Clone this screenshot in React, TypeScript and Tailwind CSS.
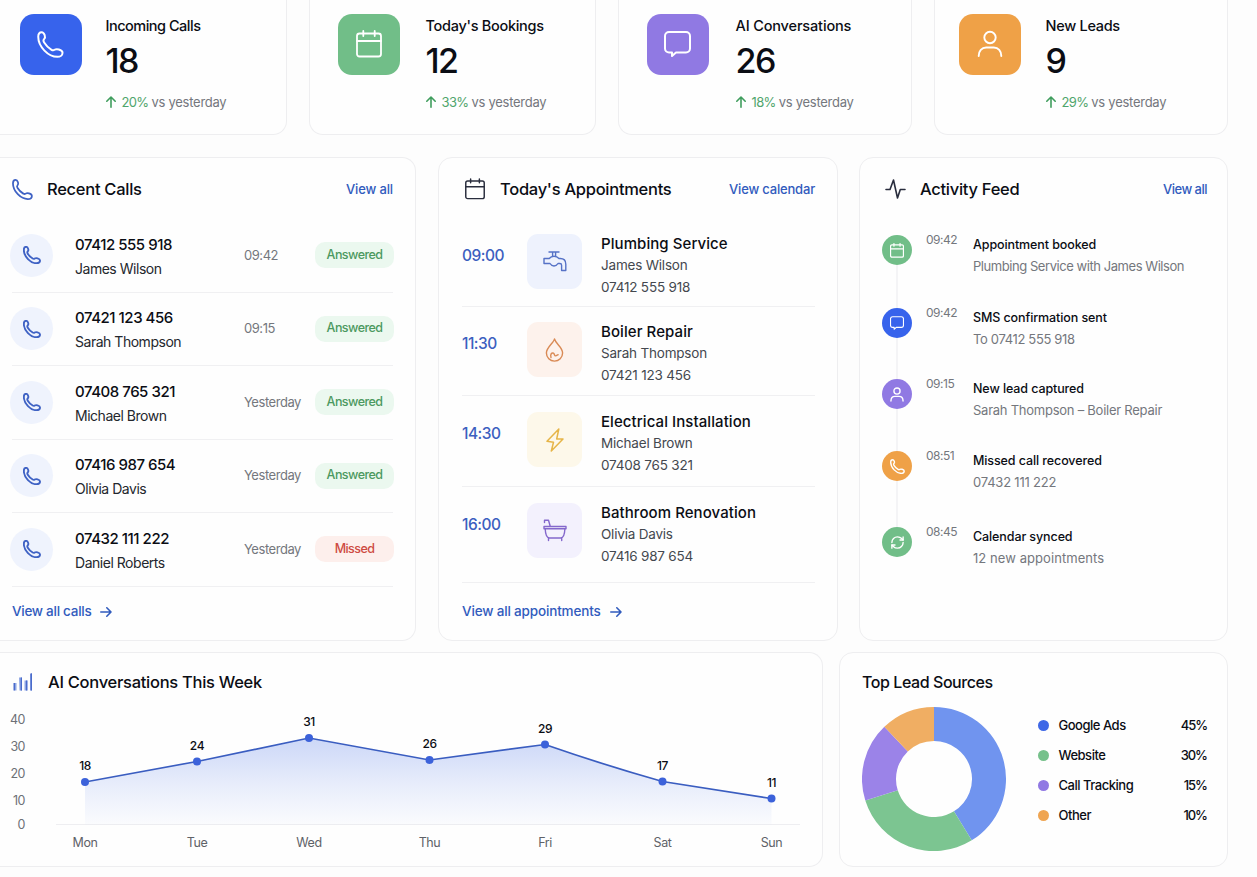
import React from "react";
import { RefreshCw } from "lucide-react";

type IconProps = { className?: string; stroke?: number };

function PhoneIcon({ className, stroke = 1.9 }: IconProps) {
  return (
    <svg viewBox="0 0 26 26" className={className} fill="none" stroke="currentColor" strokeWidth={stroke} strokeLinejoin="round">
      <path d="M1.200 5.600C1.200 2.900 2.600 1.200 4.500 1.200c1.500 0 2.300 1.200 2.900 2.800.6 1.600.4 2.800-.6 3.800-.9.9-.9 1.700.1 3.300 1.700 2.800 4.100 5.200 7.100 7 1.100.7 1.900.7 2.900 0 1.200-.8 2.500-.8 4.100-.3 2.400.7 3.600 1.700 3.600 3.100 0 2.400-2.200 4-5 4C11 24.900 1.200 15.200 1.200 5.600z" />
    </svg>
  );
}

function CalendarIcon({ className, stroke = 1.8 }: IconProps) {
  return (
    <svg viewBox="0 0 26 28" className={className} fill="none" stroke="currentColor" strokeWidth={stroke} strokeLinecap="round">
      <rect x="1" y="3.500" width="24" height="23" rx="2.500" />
      <path d="M1 11h24M7.300 1v5M18.700 1v5" />
    </svg>
  );
}

function ChatIcon({ className, stroke = 2 }: IconProps) {
  return (
    <svg viewBox="0 0 27 26" className={className} fill="none" stroke="currentColor" strokeWidth={stroke} strokeLinejoin="round">
      <path d="M5 1h17a4 4 0 0 1 4 4v12.500a4 4 0 0 1-4 4H12L8 25v-3.500H5a4 4 0 0 1-4-4V5a4 4 0 0 1 4-4z" />
    </svg>
  );
}

function UserIcon({ className, stroke = 1.9 }: IconProps) {
  return (
    <svg viewBox="0 0 26 28" className={className} fill="none" stroke="currentColor" strokeWidth={stroke} strokeLinecap="round">
      <circle cx="13" cy="7.500" r="5.700" />
      <path d="M1.700 26c0-5 3-8.500 7.500-8.500h7.600c4.500 0 7.500 3.500 7.500 8.500" />
    </svg>
  );
}

function PulseIcon({ className }: IconProps) {
  return (
    <svg viewBox="0 0 21 20" className={className} fill="none" stroke="currentColor" strokeWidth="1.600" strokeLinecap="round" strokeLinejoin="round">
      <path d="M1 10.500h4L8.500 1l4 18 2.800-8.500H20" />
    </svg>
  );
}

function BarsIcon({ className }: IconProps) {
  return (
    <svg viewBox="0 0 20 18" className={className}>
      <path fill="#8ea6e4" d="M1.500 10h2v7.500h-2zM6 4.500h3v13H6.500zM11.500 7.500h3v10h-3zM17 1h2v16.500h-2z" />
      <path fill="#4a6bcb" d="M.5 10H2v7.500H.5zM7.700 4.500H9v13H7.700zM13 7.500h1.300v10H13zM17.500.3H19v17.200h-1.300z" />
    </svg>
  );
}

function FaucetIcon() {
  return (
    <svg viewBox="0 0 24 21" className="h-[21px] w-6" fill="none" stroke="currentColor" strokeWidth="1.400" strokeLinejoin="round" strokeLinecap="round">
      <path d="M6 1h10M9.600 1v4.200M12.600 1v4.200" />
      <path d="M1 7.500h5.200C7.400 6 9 5.200 11 5.200S14.700 6 16 7.500h1.200c3.500 0 5.600 2.200 5.600 5.700v6.300h-4.200v-5.300c0-1.100-.6-1.700-1.700-1.700H15c-1 1.700-2.300 2.500-4 2.500s-3-.8-4-2.500H1z" />
    </svg>
  );
}

function FlameIcon() {
  return (
    <svg viewBox="0 0 19 24" className="h-6 w-[19px]" fill="none" stroke="currentColor" strokeWidth="1.400" strokeLinejoin="round" strokeLinecap="round">
      <path d="M9.500 1C8.800 5 1.400 9.200 1.400 15a8.100 8.100 0 0 0 16.200 0C17.600 9.200 11 6.200 9.500 1z" />
      <path d="M6 19.500c-1-3.300.8-5.300 2.500-4.300 1.300.8.600 2.700 2.200 2.700 1.200 0 1.300-1.200 2.400-1.200" />
    </svg>
  );
}

function BoltIcon() {
  return (
    <svg viewBox="0 0 18 24" className="h-6 w-[18px]" fill="none" stroke="currentColor" strokeWidth="1.500" strokeLinejoin="round">
      <path d="M12.800 1L1 13.200l6.500 1L5.300 23 17 11h-6.300z" />
    </svg>
  );
}

function BathIcon() {
  return (
    <svg viewBox="0 0 24 23" className="h-[23px] w-6" fill="none" stroke="currentColor" strokeWidth="1.400" strokeLinejoin="round" strokeLinecap="round">
      <path d="M1.500 3.500V1.300h4L7.300 7.500H23v2.300H1V7.500h6" />
      <path d="M2.200 9.800c.2 5 1.400 9.200 4.300 9.200h11.200c2.900 0 4-4.200 4.200-9.200M5.500 19v2.500M18.700 19v2.500" />
    </svg>
  );
}

function Arrow({ className }: IconProps) {
  return (
    <svg viewBox="0 0 12 12" className={className} fill="none" stroke="currentColor" strokeWidth="1.600" strokeLinecap="round" strokeLinejoin="round">
      <path d="M.8 6h10.200M6.800 1.800L11 6l-4.200 4.200" />
    </svg>
  );
}

const stats = [
  { label: "Incoming Calls", value: "18", change: "20%", card: "border-l-0 rounded-br-[14px] pl-5 gap-[24px]", track: "tracking-[-0.034em]", box: "bg-[#3763ec]", icon: <PhoneIcon className="size-[27px]" /> },
  { label: "Today's Bookings", value: "12", change: "33%", card: "rounded-b-[14px] pl-7 gap-[26px]", track: "tracking-[-0.02em]", box: "bg-[#71be88]", icon: <CalendarIcon className="h-7 w-[26px]" /> },
  { label: "AI Conversations", value: "26", change: "18%", card: "rounded-b-[14px] pl-7 gap-[27px]", track: "tracking-[-0.01em]", box: "bg-[#9079e3]", icon: <ChatIcon className="h-[26px] w-[27px]" /> },
  { label: "New Leads", value: "9", change: "29%", card: "rounded-b-[14px] pl-6 gap-[25px]", track: "tracking-[-0.02em]", box: "bg-[#efa147]", icon: <UserIcon className="h-7 w-[26px]" /> },
];

const calls = [
  { number: "07412 555 918", name: "James Wilson", time: "09:42", missed: false },
  { number: "07421 123 456", name: "Sarah Thompson", time: "09:15", missed: false },
  { number: "07408 765 321", name: "Michael Brown", time: "Yesterday", missed: false },
  { number: "07416 987 654", name: "Olivia Davis", time: "Yesterday", missed: false },
  { number: "07432 111 222", name: "Daniel Roberts", time: "Yesterday", missed: true },
];

const appointments = [
  { time: "09:00", title: "Plumbing Service", name: "James Wilson", phone: "07412 555 918", row: "h-[88px] pt-[15px]", box: "bg-[#eef2fd] text-[#5672c6]", icon: <FaucetIcon /> },
  { time: "11:30", title: "Boiler Repair", name: "Sarah Thompson", phone: "07421 123 456", row: "h-[89px] pt-[15px]", box: "bg-[#fdf2ec] text-[#d98a55]", icon: <FlameIcon /> },
  { time: "14:30", title: "Electrical Installation", name: "Michael Brown", phone: "07408 765 321", row: "h-[91px] pt-4", box: "bg-[#fdf8ea] text-[#e6b548]", icon: <BoltIcon /> },
  { time: "16:00", title: "Bathroom Renovation", name: "Olivia Davis", phone: "07416 987 654", row: "h-[96px] pt-4", box: "bg-[#f3f1fd] text-[#8468cc]", icon: <BathIcon /> },
];

const feed = [
  { time: "09:42", title: "Appointment booked", text: "Plumbing Service with James Wilson", row: "h-[73px]", track: "tracking-[-0.034em]", dot: "bg-[#71be88]", icon: <CalendarIcon className="h-[15px] w-[14px]" stroke={2.2} /> },
  { time: "09:42", title: "SMS confirmation sent", text: "To 07412 555 918", row: "h-[71px]", track: "tracking-[-0.026em]", dot: "bg-[#3763ec]", icon: <ChatIcon className="size-[14px]" stroke={2.2} /> },
  { time: "09:15", title: "New lead captured", text: "Sarah Thompson – Boiler Repair", row: "h-[72px]", track: "tracking-[-0.019em]", dot: "bg-[#9079e3]", icon: <UserIcon className="h-[15px] w-[14px]" stroke={2.6} /> },
  { time: "08:51", title: "Missed call recovered", text: "07432 111 222", row: "h-[76px]", track: "tracking-[-0.016em]", dot: "bg-[#efa147]", icon: <PhoneIcon className="size-[15px]" stroke={2.4} /> },
  { time: "08:45", title: "Calendar synced", text: "12 new appointments", row: "h-[60px]", track: "tracking-[0.005em]", dot: "bg-[#71be88]", icon: <RefreshCw className="size-[15px]" strokeWidth={2.2} /> },
];

const points = [
  { day: "Mon", value: 18, x: 85, y: 71 },
  { day: "Tue", value: 24, x: 197, y: 50.5 },
  { day: "Wed", value: 31, x: 309, y: 27 },
  { day: "Thu", value: 26, x: 429.5, y: 49 },
  { day: "Fri", value: 29, x: 545, y: 33.5 },
  { day: "Sat", value: 17, x: 662.5, y: 70.5 },
  { day: "Sun", value: 11, x: 771.5, y: 87.5 },
];

const yAxis = [
  { value: 40, y: 8 },
  { value: 30, y: 35 },
  { value: 20, y: 62.5 },
  { value: 10, y: 89.5 },
  { value: 0, y: 113 },
];

const sources = [
  { name: "Google Ads", percent: "45%", dot: "bg-[#3f68e6]", fill: "#7094ef", from: 0, to: 148.4 },
  { name: "Website", percent: "30%", dot: "bg-[#76c18b]", fill: "#7cc591", from: 148.4, to: 252.6 },
  { name: "Call Tracking", percent: "15%", dot: "bg-[#9079e3]", fill: "#9b83e8", from: 252.6, to: 316.4 },
  { name: "Other", percent: "10%", dot: "bg-[#efa552]", fill: "#f0ae63", from: 316.4, to: 360 },
];

function slice(from: number, to: number) {
  const at = (deg: number, r: number) => {
    const a = (deg * Math.PI) / 180;
    return `${72 + r * Math.sin(a)} ${72 - r * Math.cos(a)}`;
  };
  return `M${at(from, 72)}A72 72 0 0 1 ${at(to, 72)}L${at(to, 38)}A38 38 0 0 0 ${at(from, 38)}Z`;
}

function Title({ children }: { children: React.ReactNode }) {
  return <h2 className="text-[16.5px] leading-6 font-medium tracking-[-0.017em]">{children}</h2>;
}

function Stats() {
  return (
    <div className="grid grid-cols-[287px_287px_294px_294px] gap-[22px]">
      {stats.map((s) => (
        <div key={s.label} className={`flex h-[135px] border border-t-0 border-[#eeeef0] bg-[#fefefe] ${s.card}`}>
          <div className={`mt-[13.5px] flex size-[61.5px] shrink-0 items-center justify-center rounded-[14px] text-white ${s.box}`}>{s.icon}</div>
          <div className="pt-[15.5px]">
            <p className={`text-[14.5px] leading-5 font-medium ${s.track}`}>{s.label}</p>
            <p className="mt-[3px] text-[34px] leading-[44px] font-medium tracking-[-0.045em]">{s.value}</p>
            <p className="mt-[9px] flex items-center text-[13px] leading-5 tracking-[-0.02em] text-[#74777d]">
              <Arrow className="-ml-px mr-[5px] size-3 -rotate-90 text-[#3f9d5d]" />
              <span className="mr-[3px] tracking-[-0.05em] text-[#4fa56c]">{s.change}</span> vs yesterday
            </p>
          </div>
        </div>
      ))}
    </div>
  );
}

function RecentCalls() {
  return (
    <section className="mr-px rounded-r-[14px] border border-l-0 border-[#eeeef0] bg-[#fefefe] pr-[22px] pl-3">
      <div className="flex h-[61px] items-center pt-px">
        <PhoneIcon className="size-[21px] text-[#3f62c4]" stroke={2.2} />
        <div className="ml-[14px] flex-1">
          <Title>Recent Calls</Title>
        </div>
        <a className="pt-px text-[13px] font-medium tracking-[-0.01em] text-[#315bbd]">View all</a>
      </div>
      {calls.map((c) => (
        <div key={c.number} className="flex h-[73.5px] items-center border-b border-[#f0f0f2]">
          <div className="-ml-[2px] flex size-[43px] items-center justify-center rounded-full bg-[#eff3fd]">
            <PhoneIcon className="size-[18px] text-[#3f62c4]" stroke={2.7} />
          </div>
          <div className="ml-[22px] w-[169px] pt-[3px] leading-6">
            <p className="text-[15px] font-medium tracking-[-0.031em]">{c.number}</p>
            <p className="text-[14px] tracking-[-0.034em] text-[#24272d]">{c.name}</p>
          </div>
          <p className="flex-1 text-[13px] tracking-[-0.035em] text-[#74777d]">{c.time}</p>
          <span
            className={`-mr-px flex h-[26px] w-[79px] items-center justify-center rounded-[10px] text-[12.5px] font-medium tracking-[-0.045em] ${
              c.missed ? "bg-[#fdefec] text-[#ce4a42]" : "bg-[#ebf8ef] text-[#4b9960]"
            }`}
          >
            {c.missed ? "Missed" : "Answered"}
          </span>
        </div>
      ))}
      <a className="flex h-[50px] items-center gap-[9px] text-[13.5px] font-medium tracking-[-0.02em] text-[#315bbd]">
        View all calls <Arrow className="size-3" />
      </a>
    </section>
  );
}

function Appointments() {
  return (
    <section className="rounded-[14px] border border-[#eeeef0] bg-[#fefefe] pr-[22px] pl-[23px]">
      <div className="flex h-[61px] items-center pt-px">
        <CalendarIcon className="ml-[3px] h-[22px] w-5 text-[#292d3d]" stroke={1.9} />
        <div className="ml-[15px] flex-1">
          <Title>Today's Appointments</Title>
        </div>
        <a className="pt-px text-[13px] font-medium tracking-[-0.014em] text-[#315bbd]">View calendar</a>
      </div>
      {appointments.map((a) => (
        <div key={a.time} className={`flex items-start border-b border-[#f0f0f2] ${a.row}`}>
          <p className="mt-[11px] w-[65px] text-[15.5px] leading-[21px] font-medium tracking-[-0.032em] text-[#3c5fc0]">{a.time}</p>
          <div className={`flex size-[55px] items-center justify-center rounded-[11px] ${a.box}`}>{a.icon}</div>
          <div className="-mt-px ml-[19px] text-[13.5px] leading-[21.5px] tracking-[-0.015em] text-[#44484f]">
            <h3 className="text-[15px] leading-[22px] font-medium tracking-[0.005em] text-[#0b0d14]">{a.title}</h3>
            <p>{a.name}</p>
            <p>{a.phone}</p>
          </div>
        </div>
      ))}
      <a className="flex h-[57px] items-center gap-[9px] text-[13.5px] font-medium tracking-[-0.012em] text-[#315bbd]">
        View all appointments <Arrow className="size-3" />
      </a>
    </section>
  );
}

function ActivityFeed() {
  return (
    <section className="rounded-[14px] border border-[#eeeef0] bg-[#fefefe] pr-5 pl-[22px]">
      <div className="flex h-[61px] items-center pt-px">
        <PulseIcon className="ml-[3px] h-5 w-[21px] text-[#292d3d]" />
        <div className="ml-[14px] flex-1">
          <Title>Activity Feed</Title>
        </div>
        <a className="pt-px text-[13px] font-medium tracking-[-0.04em] text-[#315bbd]">View all</a>
      </div>
      <div className="pt-4">
        {feed.map((f, i) => (
          <div key={f.title} className={`flex ${f.row}`}>
            <div className="flex w-[30px] flex-col items-center">
              <div className={`flex size-[30px] shrink-0 items-center justify-center rounded-full text-white ${f.dot}`}>{f.icon}</div>
              {i < feed.length - 1 && <div className="w-[2px] flex-1 bg-[#f4f4f6]" />}
            </div>
            <p className="-mt-[3px] ml-[14px] w-[47px] text-[12px] leading-4 tracking-[-0.04em] text-[#74777d]">{f.time}</p>
            <div>
              <h3 className="text-[12.5px] leading-5 font-medium tracking-[-0.008em] text-[#0b0d14]">{f.title}</h3>
              <p className={`text-[13px] leading-[22px] text-[#74777d] ${f.track}`}>{f.text}</p>
            </div>
          </div>
        ))}
      </div>
    </section>
  );
}

function WeekChart() {
  const line = "M85 71L197 50.500 309 27 429.500 49 545 33.500Q604 54 662.500 70.500L771.500 87.500";
  return (
    <section className="mr-px rounded-r-[14px] border border-l-0 border-[#eeeef0] bg-[#fefefe]">
      <div className="flex h-[58px] items-center pl-[13px]">
        <BarsIcon className="h-[18px] w-5" />
        <div className="ml-[15px]">
          <Title>AI Conversations This Week</Title>
        </div>
      </div>
      <svg width="823" height="155" viewBox="0 0 823 155" className="text-[12.5px]">
        <defs>
          <linearGradient id="area" x1="0" y1="0" x2="0" y2="1">
            <stop offset="0" stopColor="#4a73e6" stopOpacity="0.28" />
            <stop offset="0.55" stopColor="#4a73e6" stopOpacity="0.12" />
            <stop offset="1" stopColor="#4a73e6" stopOpacity="0.02" />
          </linearGradient>
        </defs>
        <path d="M56 113.500H800" stroke="#eeeef1" />
        <path d={line + "V113.500H85Z"} fill="url(#area)" />
        <path d={line} fill="none" stroke="#3a5dc0" strokeWidth="1.700" />
        {yAxis.map((t) => (
          <text key={t.value} x="25" y={t.y + 4.5} textAnchor="end" fill="#6d7076" letterSpacing="-0.5">
            {t.value}
          </text>
        ))}
        {points.map((p) => (
          <g key={p.day} textAnchor="middle">
            <circle cx={p.x} cy={p.y} r="4" fill="#3c62da" />
            <text x={p.x} y={p.y - 12} fill="#0b0d14" fontSize="12" fontWeight="500" letterSpacing="-0.4">
              {p.value}
            </text>
            <text x={p.x} y="136" fill="#5f6268" letterSpacing="-0.4">
              {p.day}
            </text>
          </g>
        ))}
      </svg>
    </section>
  );
}

function LeadSources() {
  return (
    <section className="rounded-[14px] border border-[#eeeef0] bg-[#fefefe] pr-5 pl-[22px]">
      <div className="h-[54px] pt-[17px]">
        <h2 className="text-[16px] leading-6 font-medium tracking-[-0.027em]">Top Lead Sources</h2>
      </div>
      <div className="flex">
        <svg viewBox="0 0 144 144" className="size-36 shrink-0">
          {sources.map((s) => (
            <path key={s.name} d={slice(s.from, s.to)} fill={s.fill} />
          ))}
        </svg>
        <ul className="mt-1 ml-8 flex-1">
          {sources.map((s) => (
            <li key={s.name} className="flex h-[30px] items-center text-[13px] font-medium">
              <span className={`mr-[10px] -mt-px size-[10.5px] rounded-full ${s.dot}`} />
              <span className="flex-1 tracking-[-0.037em]">{s.name}</span>
              <span className="tracking-[-0.08em]">{s.percent}</span>
            </li>
          ))}
        </ul>
      </div>
    </section>
  );
}

export default function App() {
  return (
    <main className="h-[877px] w-[1257px] overflow-hidden bg-[#fdfdfd] font-['Inter',sans-serif] text-[#0b0d14]">
      <Stats />
      <div className="mt-[22px] grid h-[482px] grid-cols-[417px_400px_369px] gap-[21px]">
        <RecentCalls />
        <Appointments />
        <ActivityFeed />
      </div>
      <div className="mt-[13px] grid h-[215px] grid-cols-[824px_389px] gap-[15px]">
        <WeekChart />
        <LeadSources />
      </div>
    </main>
  );
}
